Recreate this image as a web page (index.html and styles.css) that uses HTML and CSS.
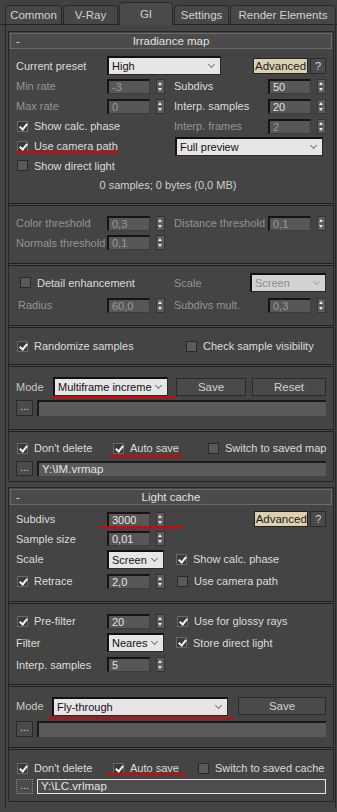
FILE: index.html
```html
<!DOCTYPE html>
<html lang="en">
<head>
  <meta charset="UTF-8" />
  <title>V-Ray GI</title>
  <meta name="viewport" content="width=device-width, initial-scale=1.0" />
  <link rel="stylesheet" href="styles.css">
</head>
<body>

  <div class="tabs">
    <div class="tab t-common">Common</div>
    <div class="tab t-vray">V-Ray</div>
    <div class="tab t-gi active">GI</div>
    <div class="tab t-settings">Settings</div>
    <div class="tab t-re">Render Elements</div>
  </div>

  <div class="panel">

    <!-- Irradiance map -->
    <div class="rollout">
      <div class="ro-head"><span class="minus">-</span><span class="ro-title">Irradiance map</span><span class="minus"></span></div>

      <div class="grp im1">
        <div class="row h21">
          <span class="c1">Current preset</span>
          <span class="dd w-high">High</span>
          <span class="adv">Advanced</span><span class="help">?</span>
        </div>
        <div class="row">
          <span class="c1 dim">Min rate</span>
          <span class="spin"><span class="fld dim">-3</span><span class="arr"></span></span>
          <span class="c3">Subdivs</span>
          <span class="spin"><span class="fld">50</span><span class="arr"></span></span>
        </div>
        <div class="row">
          <span class="c1 dim">Max rate</span>
          <span class="spin"><span class="fld dim">0</span><span class="arr"></span></span>
          <span class="c3">Interp. samples</span>
          <span class="spin"><span class="fld">20</span><span class="arr"></span></span>
        </div>
        <div class="row">
          <span class="c12 chk"><span class="cb on"></span>Show calc. phase</span>
          <span class="c3 flush dim">Interp. frames</span>
          <span class="spin"><span class="fld dim">2</span><span class="arr"></span></span>
        </div>
        <div class="row">
          <span class="c12 chk"><span class="cb on"></span>Use camera path</span>
          <span class="dd w-full">Full preview</span>
          <span class="u u-campath"></span>
        </div>
        <div class="row h19">
          <span class="c12 chk"><span class="cb"></span>Show direct light</span>
        </div>
        <div class="row h19 info">0 samples; 0 bytes (0,0 MB)</div>
      </div>
      <div class="sep"></div>

      <div class="grp im2">
        <div class="row">
          <span class="c1 dim">Color threshold</span>
          <span class="spin"><span class="fld dim">0,3</span><span class="arr"></span></span>
          <span class="c3 dim">Distance threshold</span>
          <span class="spin"><span class="fld dim">0,1</span><span class="arr"></span></span>
        </div>
        <div class="row h19">
          <span class="c1 dim">Normals threshold</span>
          <span class="spin"><span class="fld dim">0,1</span><span class="arr"></span></span>
        </div>
      </div>
      <div class="sep"></div>

      <div class="grp im3">
        <div class="row h21">
          <span class="c12 chk"><span class="cb"></span>Detail enhancement</span>
          <span class="c3s dim">Scale</span>
          <span class="dd off w-scr">Screen</span>
        </div>
        <div class="row h24">
          <span class="c1 dim">Radius</span>
          <span class="spin"><span class="fld dim">60,0</span><span class="arr"></span></span>
          <span class="c3 dim">Subdivs mult.</span>
          <span class="spin"><span class="fld dim">0,3</span><span class="arr"></span></span>
        </div>
      </div>
      <div class="sep"></div>

      <div class="grp im4">
        <div class="row">
          <span class="c12 chk"><span class="cb on"></span>Randomize samples</span>
          <span class="chk c3c"><span class="cb"></span>Check sample visibility</span>
        </div>
      </div>
      <div class="sep"></div>

      <div class="grp im5">
        <div class="row h21">
          <span class="mode-l">Mode</span>
          <span class="dd w-multi">Multiframe incremental</span>
          <span class="btn w-save">Save</span>
          <span class="btn w-reset">Reset</span>
          <span class="u u-mode"></span>
        </div>
        <div class="prow p16">
          <span class="dots">...</span><span class="path"></span>
        </div>
      </div>
      <div class="sep"></div>

      <div class="grp im6">
        <div class="row">
          <span class="chk k1"><span class="cb on"></span>Don't delete</span>
          <span class="chk k2"><span class="cb on"></span>Auto save</span>
          <span class="chk"><span class="cb"></span>Switch to saved map</span>
          <span class="u u-auto1"></span>
        </div>
        <div class="prow p15">
          <span class="dots">...</span><span class="path">Y:\IM.vrmap</span>
        </div>
      </div>
    </div>

    <!-- Light cache -->
    <div class="rollout lc">
      <div class="ro-head"><span class="minus">-</span><span class="ro-title">Light cache</span><span class="minus"></span></div>

      <div class="grp lc1">
        <div class="row">
          <span class="c1">Subdivs</span>
          <span class="spin"><span class="fld">3000</span><span class="arr"></span></span>
          <span class="adv lc-adv">Advanced</span><span class="help">?</span>
          <span class="u u-subdivs"></span>
        </div>
        <div class="row h19">
          <span class="c1">Sample size</span>
          <span class="spin"><span class="fld">0,01</span><span class="arr"></span></span>
        </div>
        <div class="row h22">
          <span class="c1">Scale</span>
          <span class="dd w-small">Screen</span>
          <span class="chk c3c"><span class="cb on"></span>Show calc. phase</span>
        </div>
        <div class="row h22">
          <span class="c1 chk"><span class="cb on"></span>Retrace</span>
          <span class="spin"><span class="fld">2,0</span><span class="arr"></span></span>
          <span class="chk c3c"><span class="cb"></span>Use camera path</span>
        </div>
      </div>
      <div class="sep"></div>

      <div class="grp lc2">
        <div class="row">
          <span class="c1 chk"><span class="cb on"></span>Pre-filter</span>
          <span class="spin"><span class="fld">20</span><span class="arr"></span></span>
          <span class="chk c3c"><span class="cb on"></span>Use for glossy rays</span>
        </div>
        <div class="row h23">
          <span class="c1">Filter</span>
          <span class="dd w-small">Nearest</span>
          <span class="chk c3c"><span class="cb on"></span>Store direct light</span>
        </div>
        <div class="row h21">
          <span class="c1">Interp. samples</span>
          <span class="spin"><span class="fld">5</span><span class="arr"></span></span>
        </div>
      </div>
      <div class="sep"></div>

      <div class="grp lc3">
        <div class="row">
          <span class="mode-l lc-mode">Mode</span>
          <span class="dd w-fly">Fly-through</span>
          <span class="btn w-save2">Save</span>
          <span class="u u-fly"></span>
        </div>
        <div class="prow p16">
          <span class="dots">...</span><span class="path"></span>
        </div>
      </div>
      <div class="sep"></div>

      <div class="grp lc4">
        <div class="row">
          <span class="chk k1"><span class="cb on"></span>Don't delete</span>
          <span class="chk k2b"><span class="cb on"></span>Auto save</span>
          <span class="chk"><span class="cb"></span>Switch to saved cache</span>
          <span class="u u-auto2"></span>
        </div>
        <div class="prow p15">
          <span class="dots focus">...</span><span class="path focus">Y:\LC.vrlmap</span>
        </div>
      </div>
    </div>

  </div>

</body>
</html>
```

FILE: styles.css
```css
body {
  margin: 0;
  width: 337px;
  background-color: #444444;
  color: #dcdcdc;
  font-family: "Liberation Sans", Arial, sans-serif;
  font-size: 11px;
  white-space: nowrap;
}

/* tabs */
.tabs {
  display: flex;
  align-items: flex-end;
  gap: 1px;
  height: 24px;
  padding-left: 5px;
  border-bottom: 1px solid #262626;
  background: #414141;
}

.tab {
  box-sizing: border-box;
  height: 19px;
  display: flex;
  align-items: center;
  justify-content: center;
  border: 1px solid #2a2a2a;
  border-bottom: none;
  border-radius: 4px 4px 0 0;
  background: #474747;
  color: #d2d2d2;
  font-size: 11.5px;
}

.tab.active {
  height: 23px;
  margin-bottom: -1px;
  background: #4a4a4a;
}

.t-common { width: 57px; }
.t-vray { width: 55px; }
.t-gi { width: 54px; }
.t-settings { width: 55px; }
.t-re { width: 106px; }

/* panel + rollouts */
.panel {
  margin: 0 1px 0 5px;
  padding: 6px 1px 6px 2px;
  border-left: 1px solid #262626;
  border-right: 1px solid #262626;
}

.rollout {
  border: 1px solid #262626;
}

.rollout.lc {
  margin-top: 5px;
}

.ro-head {
  box-sizing: border-box;
  height: 16px;
  margin: 1px 1px 0;
  display: flex;
  align-items: center;
  border: 1px solid #6a6a6a;
  background: #4b4b4b;
  color: #e2e2e2;
}

.minus {
  width: 14px;
  padding-left: 5px;
}

.ro-title {
  flex: 1;
  text-align: center;
  font-size: 11.5px;
}

.grp {
  padding: 0 7px;
}

.sep {
  height: 1px;
  background: #4d4d4d;
  border-top: 1px solid #1e1e1e;
  border-bottom: 1px solid #1e1e1e;
}

.im1 { padding-top: 6px; padding-bottom: 9px; }
.im2 { padding-top: 7px; padding-bottom: 11px; }
.im3 { padding-top: 6px; padding-bottom: 8px; }
.im4 { padding-top: 8px; padding-bottom: 8px; }
.im5 { padding-top: 9px; padding-bottom: 13px; }
.im6 { padding-top: 6px; padding-bottom: 5px; }
.lc1 { padding-top: 4px; padding-bottom: 9px; }
.lc2 { padding-top: 7px; padding-bottom: 9px; }
.lc3 { padding-top: 9px; padding-bottom: 10px; }
.lc4 { padding-top: 8px; padding-bottom: 7px; }

/* rows */
.row {
  position: relative;
  display: flex;
  align-items: center;
  height: 20px;
}

.h19 { height: 19px; }
.h21 { height: 21px; }
.h22 { height: 22px; }
.h23 { height: 23px; }
.h24 { height: 24px; }

.c1 { width: 91px; flex: none; }
.c12 { width: 158px; flex: none; }
.c3 { width: 94px; margin-left: 9px; flex: none; }
.c3.flush { margin-left: 0; }
.c3s { width: 76px; flex: none; }
.c3c { margin-left: 11px; }

.dim { color: #949494; }

.info {
  justify-content: center;
  margin-right: 6px;
  color: #d0d0d0;
}

.im3 .c1 { padding-left: 2px; width: 89px; }
.im3 .chk .cb { margin-left: 4px; }

/* spinner */
.spin {
  display: flex;
  align-items: center;
  gap: 6px;
  width: 58px;
  flex: none;
}

.fld {
  box-sizing: border-box;
  width: 43px;
  height: 15px;
  padding-left: 3px;
  line-height: 12px;
  background: #575757;
  border-top: 2px solid #141414;
  border-left: 2px solid #141414;
  border-right: 1px solid #3c3c3c;
  border-bottom: 1px solid #3c3c3c;
  color: #e2e2e2;
}

.fld.dim { color: #9a9a9a; }

.arr {
  position: relative;
  box-sizing: border-box;
  width: 9px;
  height: 15px;
  background: #5c5c5c;
  border: 1px solid #343434;
}

.arr::before,
.arr::after {
  content: "";
  position: absolute;
  left: 1px;
  border-left: 2.5px solid transparent;
  border-right: 2.5px solid transparent;
}

.arr::before {
  top: 2px;
  border-bottom: 3px solid #e8e8e8;
}

.arr::after {
  bottom: 2px;
  border-top: 3px solid #e8e8e8;
}

/* checkbox */
.chk {
  display: flex;
  align-items: center;
  gap: 6px;
}

.cb {
  position: relative;
  box-sizing: border-box;
  width: 11px;
  height: 11px;
  margin-left: 1px;
  flex: none;
  background: #5a5a5a;
  border: 1px solid #2a2a2a;
}

.cb.on {
  background: #3a3a3a;
  border-color: #6a6a6a;
}

.cb.on::after {
  content: "";
  position: absolute;
  left: 3px;
  top: 0;
  width: 3px;
  height: 6px;
  border: solid #f2f2f2;
  border-width: 0 2px 2px 0;
  transform: rotate(40deg);
}

.k1 { width: 96px; flex: none; }
.k2 { width: 95px; flex: none; }
.k2b { width: 85px; flex: none; }

/* dropdown */
.dd {
  position: relative;
  box-sizing: border-box;
  height: 19px;
  padding: 0 14px 0 3px;
  line-height: 16px;
  overflow: hidden;
  background: #e6e6e6;
  border-top: 2px solid #111;
  border-left: 2px solid #111;
  border-right: 1px solid #2a2a2a;
  border-bottom: 1px solid #2a2a2a;
  color: #111;
  flex: none;
}

.dd::after {
  content: "";
  position: absolute;
  right: 6px;
  top: 4px;
  width: 4px;
  height: 4px;
  border: solid #7a7a7a;
  border-width: 0 1px 1px 0;
  transform: rotate(45deg);
}

.dd.off {
  background: #d2d2d2;
  color: #8c8c8c;
}

.dd.off::after { border-color: #a8a8a8; }

.w-high { width: 114px; }
.w-full { width: 148px; margin-left: 1px; }
.w-scr { width: 76px; }
.w-multi { width: 115px; padding-right: 0; }
.w-small { width: 57px; padding-right: 0; }
.w-fly { width: 176px; }

.w-multi::before,
.w-small::before {
  content: "";
  position: absolute;
  right: 0;
  top: 0;
  width: 15px;
  height: 16px;
  background: #e6e6e6;
}

/* buttons */
.adv {
  box-sizing: border-box;
  width: 56px;
  height: 16px;
  margin-left: 32px;
  line-height: 14px;
  text-align: center;
  background: #ddd0b0;
  border: 1px solid #222;
  color: #1c1c1c;
  font-size: 11.5px;
}

.lc-adv { margin-left: 89px; }

.help {
  box-sizing: border-box;
  width: 16px;
  height: 16px;
  margin-left: 2px;
  line-height: 14px;
  text-align: center;
  background: #4a4a4a;
  border: 1px solid #2a2a2a;
  color: #d4d4d4;
}

.btn {
  box-sizing: border-box;
  height: 18px;
  line-height: 16px;
  text-align: center;
  background: #4a4a4a;
  border: 1px solid #2a2a2a;
  color: #d2d2d2;
  font-size: 11.5px;
}

.mode-l { width: 37px; flex: none; color: #c8c8c8; }
.lc-mode { width: 36px; }
.w-save { width: 71px; margin-left: 8px; }
.w-reset { width: 75px; margin-left: 6px; }
.w-save2 { width: 89px; margin-left: 10px; }

/* path rows */
.prow {
  display: flex;
  margin-top: 3px;
}

.p16 { height: 16px; }
.p15 { height: 15px; }
.lc3 .prow { margin-top: 5px; }
.lc4 .prow { margin-top: 1px; }

.dots {
  box-sizing: border-box;
  width: 17px;
  margin-right: 4px;
  line-height: 10px;
  text-align: center;
  background: #4b4b4b;
  border: 1px solid #2a2a2a;
  color: #d0d0d0;
  flex: none;
}

.dots.focus { border: 1px dotted #888; }

.path {
  box-sizing: border-box;
  flex: 1;
  padding-left: 3px;
  line-height: 12px;
  background: #5a5a5a;
  border-top: 2px solid #1a1a1a;
  border-left: 2px solid #1a1a1a;
  color: #e4e4e4;
  font-size: 11.5px;
}

.path.focus {
  border: 1px solid #e6e6e6;
  background: #4e4e4e;
  line-height: 13px;
}

/* red annotation strokes */
.u {
  position: absolute;
  height: 2px;
  background: #e00000;
}

.u-campath { left: 0; top: 15px; width: 102px; }
.u-mode { left: 37px; top: 20px; width: 122px; }
.u-auto1 { left: 93px; top: 17px; width: 73px; }
.u-subdivs { left: 83px; top: 17px; width: 83px; }
.u-fly { left: 32px; top: 21px; width: 185px; }
.u-auto2 { left: 90px; top: 15px; width: 79px; }
```
